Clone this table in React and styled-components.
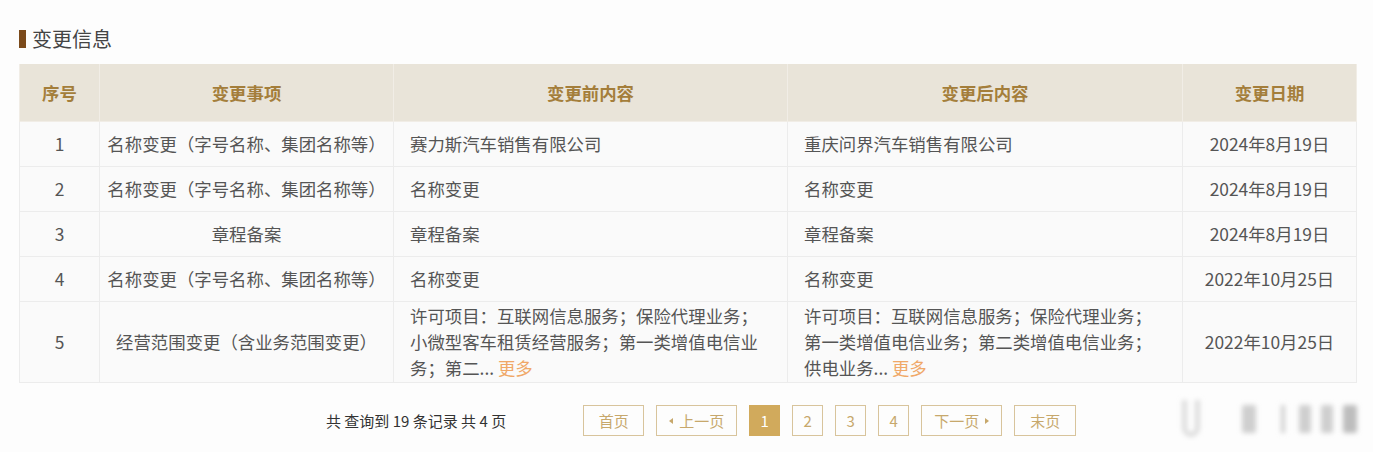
import React from "react";
import styled, { createGlobalStyle } from "styled-components";

const Global = createGlobalStyle`
  html, body { margin: 0; padding: 0; background: #fdfdfd; }
  body { font-family: "Noto Sans CJK SC", "Noto Sans", sans-serif; color: #555; }
`;

const Page = styled.div`
  position: relative;
  width: 1373px;
  height: 452px;
  padding: 26px 17px 0 19px;
  box-sizing: border-box;
  overflow: hidden;
`;

const Title = styled.h2`
  display: flex;
  align-items: center;
  gap: 6px;
  margin: 0 0 13px;
  height: 25px;
  font-size: 20px;
  font-weight: 400;
  color: #444;
  &::before {
    content: "";
    width: 7px;
    height: 18px;
    background: #7b4a1b;
  }
`;

const Table = styled.table`
  width: 1337px;
  border-collapse: collapse;
  table-layout: fixed;
  background: #fafafa;
  font-size: 17.4px;
`;

const Th = styled.th`
  height: 57px;
  padding: 0;
  background: #e9e4d9;
  color: #a47e3b;
  font-weight: 700;
  font-size: 17.4px;
  text-align: center;
  border: 1px solid #f1ede6;
  border-top: none;
`;

const Td = styled.td`
  height: ${(p) => (p.$tall ? "80px" : "44px")};
  padding: 0 ${(p) => (p.$align === "left" ? "16px" : "6px")};
  text-align: ${(p) => p.$align || "center"};
  color: #555;
  line-height: 26px;
  border: 1px solid #ececec;
  vertical-align: middle;
  white-space: nowrap;
`;

const More = styled.span`
  color: #f0a868;
  cursor: pointer;
`;

const Pager = styled.div`
  display: flex;
  align-items: center;
  margin-top: 22px;
  padding-left: 307px;
  height: 31px;
`;

const Total = styled.span`
  font-size: 15px;
  color: #333;
  margin-right: 77px;
`;

const PageBtn = styled.button`
  height: 31px;
  width: ${(p) => p.$w}px;
  margin-right: ${(p) => p.$mr ?? 12}px;
  padding: 0;
  border: 1px solid ${(p) => (p.$active ? "#d1aa5c" : "#d8c49c")};
  background: ${(p) => (p.$active ? "#d1aa5c" : "#fdfdfd")};
  color: ${(p) => (p.$active ? "#fff" : "#c7a86c")};
  font-family: "Noto Sans CJK SC", "Noto Sans", sans-serif;
  font-size: 15px;
  display: flex;
  align-items: center;
  justify-content: center;
  gap: 6px;
  box-sizing: border-box;
`;

const Arrow = styled.span`
  width: 0;
  height: 0;
  border-top: 3px solid transparent;
  border-bottom: 3px solid transparent;
  ${(p) =>
    p.$dir === "left"
      ? "border-right: 4px solid #c7a86c;"
      : "border-left: 4px solid #c7a86c;"}
`;

const Watermark = styled.svg`
  position: absolute;
  left: 1172px;
  top: 388px;
`;

const rows = [
  ["1", "名称变更（字号名称、集团名称等）", "赛力斯汽车销售有限公司", "重庆问界汽车销售有限公司", "2024年8月19日"],
  ["2", "名称变更（字号名称、集团名称等）", "名称变更", "名称变更", "2024年8月19日"],
  ["3", "章程备案", "章程备案", "章程备案", "2024年8月19日"],
  ["4", "名称变更（字号名称、集团名称等）", "名称变更", "名称变更", "2022年10月25日"],
];

export default function App() {
  return (
    <>
      <Global />
      <Page>
        <Title>变更信息</Title>
        <Table>
          <colgroup>
            <col style={{ width: 80 }} />
            <col style={{ width: 294 }} />
            <col style={{ width: 394 }} />
            <col style={{ width: 395 }} />
            <col style={{ width: 174 }} />
          </colgroup>
          <thead>
            <tr>
              <Th>序号</Th>
              <Th>变更事项</Th>
              <Th>变更前内容</Th>
              <Th>变更后内容</Th>
              <Th>变更日期</Th>
            </tr>
          </thead>
          <tbody>
            {rows.map((r) => (
              <tr key={r[0]}>
                <Td>{r[0]}</Td>
                <Td>{r[1]}</Td>
                <Td $align="left">{r[2]}</Td>
                <Td $align="left">{r[3]}</Td>
                <Td>{r[4]}</Td>
              </tr>
            ))}
            <tr>
              <Td $tall>5</Td>
              <Td $tall>经营范围变更（含业务范围变更）</Td>
              <Td $tall $align="left">
                许可项目：互联网信息服务；保险代理业务；
                <br />
                小微型客车租赁经营服务；第一类增值电信业
                <br />
                务；第二... <More>更多</More>
              </Td>
              <Td $tall $align="left">
                许可项目：互联网信息服务；保险代理业务；
                <br />
                第一类增值电信业务；第二类增值电信业务；
                <br />
                供电业务... <More>更多</More>
              </Td>
              <Td $tall>2022年10月25日</Td>
            </tr>
          </tbody>
        </Table>
        <Pager>
          <Total>共 查询到 19 条记录 共 4 页</Total>
          <PageBtn $w={61}>首页</PageBtn>
          <PageBtn $w={81}>
            <Arrow $dir="left" />
            上一页
          </PageBtn>
          <PageBtn $w={31} $active>1</PageBtn>
          <PageBtn $w={31}>2</PageBtn>
          <PageBtn $w={31}>3</PageBtn>
          <PageBtn $w={31}>4</PageBtn>
          <PageBtn $w={81}>
            下一页
            <Arrow $dir="right" />
          </PageBtn>
          <PageBtn $w={62} $mr={0}>末页</PageBtn>
        </Pager>
        <Watermark width="200" height="60" viewBox="0 0 200 60">
          <defs>
            <filter id="wb" x="-30%" y="-30%" width="160%" height="160%">
              <feGaussianBlur stdDeviation="2.6" />
            </filter>
          </defs>
          <g filter="url(#wb)" fill="#cfcfcf">
            <path d="M10 12 v28 a9 9 0 0 0 18 0 v-28 h-5 v28 a4 4 0 0 1 -8 0 v-28 z" fill="#dcdcdc" />
            <rect x="22" y="40" width="0" height="0" />
            <rect x="70" y="17" width="14" height="28" rx="2" />
            <rect x="109" y="17" width="4" height="28" />
            <rect x="127" y="17" width="12" height="28" rx="2" />
            <rect x="149" y="17" width="12" height="28" rx="2" />
            <rect x="171" y="17" width="14" height="28" rx="2" fill="#bdbdbd" />
          </g>
        </Watermark>
      </Page>
    </>
  );
}
